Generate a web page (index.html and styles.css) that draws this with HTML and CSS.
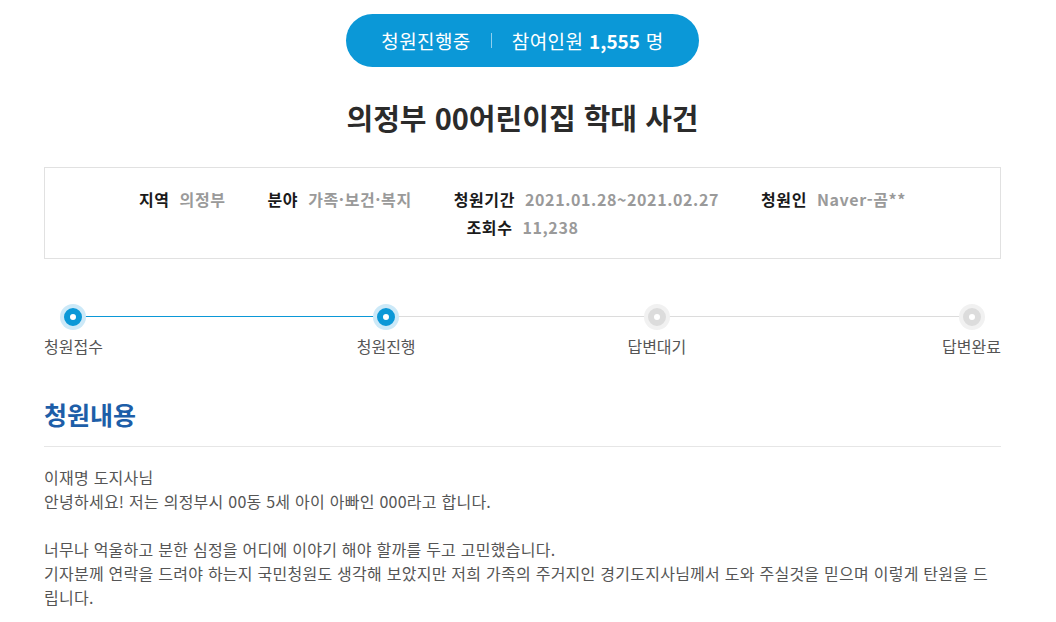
FILE: index.html
```html
<!DOCTYPE html>
<html lang="ko">
<head>
<meta charset="utf-8">
<link rel="stylesheet" href="styles.css">
</head>
<body>
<div class="page">
  <div class="status-wrap">
    <div class="status">
      <span>청원진행중</span>
      <span class="sep"></span>
      <span>참여인원 <b>1,555</b> 명</span>
    </div>
  </div>
  <h1 class="title">의정부 00어린이집 학대 사건</h1>
  <div class="info">
    <ul class="info-list">
      <li><span class="k">지역</span><span class="v">의정부</span></li>
      <li><span class="k">분야</span><span class="v">가족·보건·복지</span></li>
      <li><span class="k">청원기간</span><span class="v">2021.01.28~2021.02.27</span></li>
      <li><span class="k">청원인</span><span class="v">Naver-곰**</span></li>
      <li><span class="k">조회수</span><span class="v">11,238</span></li>
    </ul>
  </div>
  <div class="steps">
    <div class="step done"><span class="dot"></span><span class="label">청원접수</span></div>
    <div class="gap"></div>
    <div class="step done"><span class="dot"></span><span class="label">청원진행</span></div>
    <div class="gap"></div>
    <div class="step"><span class="dot"></span><span class="label">답변대기</span></div>
    <div class="gap"></div>
    <div class="step"><span class="dot"></span><span class="label">답변완료</span></div>
  </div>
  <h2 class="section-title">청원내용</h2>
  <div class="content">
    <p>이재명 도지사님<br>안녕하세요! 저는 의정부시 00동 5세 아이 아빠인 000라고 합니다.</p>
    <p>너무나 억울하고 분한 심정을 어디에 이야기 해야 할까를 두고 고민했습니다.<br>기자분께 연락을 드려야 하는지 국민청원도 생각해 보았지만 저희 가족의 주거지인 경기도지사님께서 도와 주실것을 믿으며 이렇게 탄원을 드립니다.</p>
  </div>
</div>
</body>
</html>
```
FILE: styles.css
```css
* { box-sizing: border-box; }
html, body { margin: 0; padding: 0; background: #fff; }
body {
  font-family: "Noto Sans CJK KR", "Noto Sans", sans-serif;
  color: #333;
}
.page {
  width: 957px;
  margin-left: 44px;
  padding-top: 14px;
}
.status-wrap { display: flex; justify-content: center; }
.status {
  display: flex;
  align-items: center;
  height: 53px;
  width: 353px;
  justify-content: center;
  gap: 20px;
  background: #0b98d7;
  color: #fff;
  border-radius: 27px;
  font-size: 19px;
  letter-spacing: 0.4px;
}
.status b { font-weight: 700; letter-spacing: 0; }
.sep { width: 1px; height: 15px; background: #8ecfee; }
.title {
  margin: 26px 0 0;
  text-align: center;
  font-size: 29px;
  line-height: 48px;
  font-weight: 700;
  color: #2b2b2b;
}
.info {
  margin-top: 26px;
  border: 1px solid #e1e1e1;
  height: 92px;
  padding-top: 17px;
}
.info-list {
  list-style: none;
  margin: 0 auto;
  padding: 0;
  width: 880px;
  display: flex;
  flex-wrap: wrap;
  justify-content: center;
  column-gap: 42px;
  row-gap: 0;
}
.info-list li {
  display: flex;
  gap: 10px;
  font-size: 16px;
  line-height: 28px;
  letter-spacing: 0.6px;
}
.k { font-weight: 700; color: #1a1a1a; }
.v { font-weight: 700; color: #9a9a9a; }
.steps {
  margin-top: 45px;
  display: grid;
  grid-template-columns: auto 254fr auto 212fr auto 256fr auto;
  position: relative;
}
.steps::before,
.steps::after {
  content: "";
  position: absolute;
  left: 29px;
  top: 12px;
  height: 1px;
}
.steps::before { right: 30px; background: #dcdcdc; }
.steps::after { width: 313px; background: #0b98d7; }
.step {
  display: flex;
  flex-direction: column;
  align-items: center;
  position: relative;
  z-index: 1;
}
.dot {
  width: 26px;
  height: 26px;
  border-radius: 50%;
  background: #f1f1f1;
  display: flex;
  align-items: center;
  justify-content: center;
}
.dot::after {
  content: "";
  width: 6px;
  height: 6px;
  border-radius: 50%;
  background: #fff;
  border: 6px solid #dcdcdc;
  box-sizing: content-box;
}
.step.done .dot { background: #cce9f8; }
.step.done .dot::after { border-color: #0b98d7; }
.label {
  margin-top: 5px;
  font-size: 16px;
  line-height: 22px;
  color: #555;
}
.section-title {
  margin: 37px 0 0;
  font-size: 25px;
  line-height: 40px;
  font-weight: 700;
  color: #1d5ea8;
  padding-bottom: 12px;
  border-bottom: 1px solid #e6e6e6;
}
.content {
  padding-top: 18px;
  font-size: 16px;
  line-height: 24px;
  color: #555;
  letter-spacing: 0.25px;
}
.content p { margin: 0 0 24px; }
```
